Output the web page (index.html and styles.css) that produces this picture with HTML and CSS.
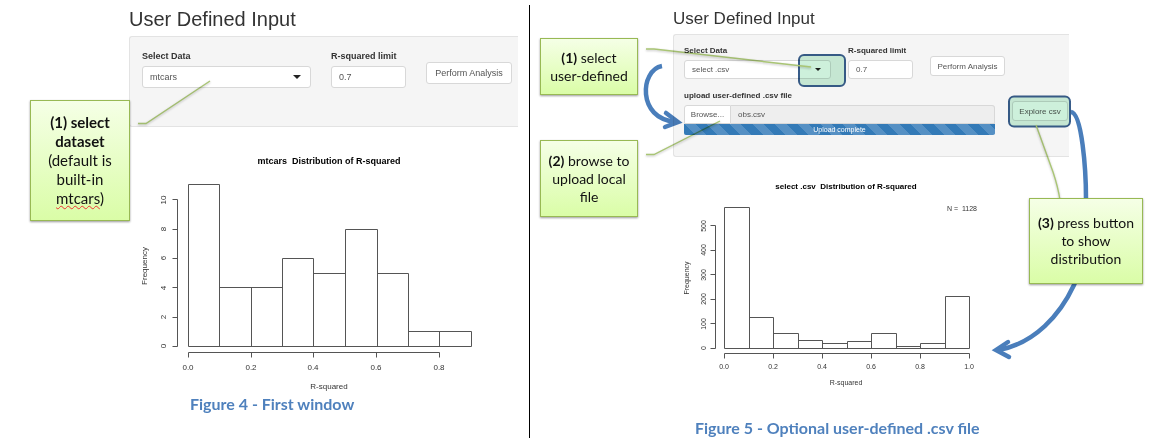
FILE: index.html
```
<!DOCTYPE html>
<html lang="en">
<head>
<meta charset="utf-8">
<title>User Defined Input</title>
<link rel="stylesheet" href="styles.css">
</head>
<body>
<main class="figures">
  <figure class="figure figure-first">
    <h1 class="title">User Defined Input</h1>
    <form class="panel">
      <div class="row">
        <div class="field">
          <label for="data-a">Select Data</label>
          <span class="select"><select id="data-a"><option>mtcars</option><option>select .csv</option></select></span>
        </div>
        <div class="field">
          <label for="limit-a">R-squared limit</label>
          <input class="control" id="limit-a" type="text" value="0.7">
        </div>
        <button class="btn" type="button">Perform Analysis</button>
      </div>
    </form>
    <svg class="chart" viewBox="129 127 389 265" role="img" aria-label="mtcars distribution of R-squared">
      <text class="chart-title" x="329" y="164" xml:space="preserve">mtcars  Distribution of R-squared</text>
      <g class="lines">
        <path d="M172.5 346.5H177.5V199.5H172.5M172.5 317.5h5M172.5 287.5h5M172.5 258.5h5M172.5 229.5h5"/>
        <path d="M188.5 357.5V352.5H439.5V357.5M251.5 352.5v5M313.5 352.5v5M376.5 352.5v5"/>
        <path d="M188.5 346.5V184.5H219.5V346.5M219.5 287.5H282.5M251.5 287.5V346.5M282.5 346.5V258.5H313.5V346.5M313.5 273.5H345.5M345.5 346.5V229.5H377.5V346.5M377.5 273.5H408.5V346.5M408.5 331.5H471.5V346.5M439.5 331.5V346.5M188.5 346.5H471.5"/>
      </g>
      <g class="ticks">
        <text x="188" y="370">0.0</text><text x="251" y="370">0.2</text><text x="313" y="370">0.4</text><text x="376" y="370">0.6</text><text x="439" y="370">0.8</text>
        <text x="329" y="389">R-squared</text>
        <text transform="translate(166 346) rotate(-90)">0</text>
        <text transform="translate(166 317) rotate(-90)">2</text>
        <text transform="translate(166 288) rotate(-90)">4</text>
        <text transform="translate(166 258) rotate(-90)">6</text>
        <text transform="translate(166 229) rotate(-90)">8</text>
        <text transform="translate(166 200) rotate(-90)">10</text>
        <text transform="translate(147 266) rotate(-90)">Frequency</text>
      </g>
    </svg>
    <figcaption class="caption">Figure 4 - First window</figcaption>
    <svg class="notes" width="529" height="433" viewBox="0 5 529 433" aria-hidden="true">
      <path class="leader" d="M138 123.5H146L210 81"/>
    </svg>
    <p class="callout callout-dataset"><span><b>(1) select<br>dataset</b><br>(default is<br>built-in<br><span class="misspelt">mtcars</span>)</span></p>
  </figure>

  <figure class="figure figure-second">
    <h2 class="title">User Defined Input</h2>
    <form class="panel">
      <div class="row">
        <div class="field">
          <label for="data-b">Select Data</label>
          <span class="select"><select id="data-b"><option>select .csv</option><option>mtcars</option></select></span>
        </div>
        <div class="field">
          <label for="limit-b">R-squared limit</label>
          <input class="control" id="limit-b" type="text" value="0.7">
        </div>
        <button class="btn" type="button">Perform Analysis</button>
      </div>
      <div class="row row-upload">
        <div class="field">
          <label for="file-b">upload user-defined .csv file</label>
          <div>
            <div class="file">
              <button class="browse" type="button">Browse...</button>
              <input class="control file-name" id="file-b" type="text" value="obs.csv" readonly>
            </div>
            <div class="progress">Upload complete</div>
          </div>
        </div>
        <button class="btn" type="button">Explore csv</button>
      </div>
    </form>
    <svg class="chart" viewBox="673 157 396 251" role="img" aria-label="select .csv distribution of R-squared">
      <text class="chart-title" x="846" y="189" xml:space="preserve">select .csv  Distribution of R-squared</text>
      <g class="lines">
        <path d="M710.5 348.5H715.5V225.5H710.5M710.5 323.5h5M710.5 299.5h5M710.5 274.5h5M710.5 250.5h5"/>
        <path d="M724.5 358.5V353.5H969.5V358.5M773.5 353.5v5M822.5 353.5v5M871.5 353.5v5M920.5 353.5v5"/>
        <path d="M724.5 348.5V207.5H749.5V348.5M749.5 317.5H773.5V348.5M773.5 333.5H798.5V348.5M798.5 340.5H822.5V348.5M822.5 343.5H847.5M847.5 348.5V341.5H871.5M871.5 348.5V333.5H896.5V348.5M896.5 346.5H920.5M920.5 348.5V343.5H945.5M945.5 348.5V296.5H969.5V348.5M724.5 348.5H969.5"/>
      </g>
      <g class="ticks">
        <text x="962" y="211" xml:space="preserve">N =  1128</text>
        <text x="724" y="369">0.0</text><text x="773" y="369">0.2</text><text x="822" y="369">0.4</text><text x="871" y="369">0.6</text><text x="920" y="369">0.8</text><text x="969" y="369">1.0</text>
        <text x="846" y="385">R-squared</text>
        <text transform="translate(706 348) rotate(-90)">0</text>
        <text transform="translate(706 324) rotate(-90)">100</text>
        <text transform="translate(706 299) rotate(-90)">200</text>
        <text transform="translate(706 275) rotate(-90)">300</text>
        <text transform="translate(706 250) rotate(-90)">400</text>
        <text transform="translate(706 226) rotate(-90)">500</text>
        <text transform="translate(689 278) rotate(-90)">Frequency</text>
      </g>
    </svg>
    <figcaption class="caption">Figure 5 - Optional user-defined .csv file</figcaption>
    <svg class="notes" width="624" height="433" viewBox="530 5 624 433" aria-hidden="true">
      <rect class="spot" x="799" y="55" width="46" height="31" rx="5"/>
      <rect class="spot" x="1009" y="96.5" width="61" height="30" rx="5"/>
      <path class="leader" d="M646 49H654L811 67"/>
      <path class="leader" d="M646 154.5H654L720 121"/>
      <path class="leader" d="M1036 125L1053 172Q1058 187 1060 200"/>
      <path class="arrow" d="M662 66C640 70 637 119 675 121.5"/>
      <path class="arrow arrow-head" d="M666 113L678 122L665 127"/>
      <path class="arrow" d="M1071 112C1082 113 1086 170 1086 199C1089 250 1080 272 1074 285C1060 315 1035 343 999 350"/>
      <path class="arrow arrow-head" d="M1008 342L996 350L1009 357"/>
    </svg>
    <p class="callout callout-source"><span><b>(1)</b> select<br>user-defined</span></p>
    <p class="callout callout-browse"><span><b>(2)</b> browse to<br>upload local<br>file</span></p>
    <p class="callout callout-press"><span><b>(3)</b> press button<br>to show<br>distribution</span></p>
  </figure>
</main>
</body>
</html>
```
FILE: styles.css
```
* { box-sizing: border-box; }

body {
  margin: 0;
  background: #fff;
  color: #333;
  font-family: "Liberation Sans", Arial, sans-serif;
}

.figures {
  display: grid;
  grid-template-columns: 530fr 624fr;
  padding: 5px 0 9px;
}

.figure {
  --text: 9px;
  --label-line: 11px;
  --control: 22px;
  --gap: 20px;
  position: relative;
  margin: 0;
  font-size: var(--text);
}

.figure-first {
  padding: 0 11px 0 129px;
  border-right: 1px solid #000;
}

.figure-second {
  --text: 8px;
  --label-line: 10px;
  --control: 19px;
  --gap: 17px;
  padding: 0 85px 0 143px;
}

.title {
  margin: 0 0 3px;
  font-size: 20px;
  font-weight: 400;
  line-height: 28px;
}

.figure-second .title {
  margin-bottom: 1px;
  font-size: 17px;
}

.panel {
  padding: 14px 6px 38px 12px;
  background: #f5f5f5;
  border: 1px solid #e3e3e3;
  border-right: 0;
  border-radius: 3px 0 0 3px;
}

.figure-second .panel { padding: 11px 1px 21px 10px; }

.row {
  display: grid;
  grid-template-columns: 169fr 75fr 86fr;
  align-items: start;
  gap: var(--gap);
}

.figure-second .row {
  grid-template-columns: 147fr 65fr 75fr;
  padding-right: 63px;
}

.figure-second .row-upload {
  grid-template-columns: 311fr 56fr;
  margin-top: 12px;
  padding-right: 0;
}

.field {
  display: grid;
  gap: 4px;
  min-width: 0;
}

.field label {
  font-weight: 700;
  line-height: var(--label-line);
}

.select {
  position: relative;
  display: block;
}

.select::after {
  content: "";
  position: absolute;
  top: calc(50% - 2px);
  right: 10px;
  border: 4px solid transparent;
  border-top-color: #222;
  border-bottom: 0;
  pointer-events: none;
}

.figure-second .select::after { border-width: 3px 3px 0; }

.select select,
.control,
.btn,
.browse {
  display: block;
  width: 100%;
  min-width: 0;
  height: var(--control);
  margin: 0;
  padding: 0 7px;
  background: #fff;
  border: 1px solid #d8d8d8;
  border-radius: 3px;
  color: #555;
  font: inherit;
  appearance: none;
}

.btn {
  margin-top: 11px;
  padding: 0;
  text-align: center;
}

.figure-second .btn {
  height: 20px;
  margin-top: 10px;
}

.file {
  display: grid;
  grid-template-columns: 47px 1fr;
}

.browse {
  padding: 0;
  border-radius: 3px 0 0 0;
}

.file .file-name {
  background: #eee;
  border-left: 0;
  border-radius: 0 3px 0 0;
}

.progress {
  background: repeating-linear-gradient(45deg, #337ab7 0 8px, #5590c4 8px 16px);
  border-radius: 0 0 2px 2px;
  color: #fff;
  font-size: 7px;
  line-height: 11px;
  text-align: center;
}

.chart {
  display: block;
  width: 100%;
  font-size: 8px;
  text-anchor: middle;
}

.figure-second .ticks { font-size: 7px; }

.chart-title {
  fill: #000;
  font-size: var(--text);
  font-weight: 700;
}

.ticks { fill: #333; }

.lines {
  fill: none;
  stroke: #555;
}

.caption {
  margin: 2px 0 0 61px;
  color: #4f81bd;
  font: 700 16px/20px Lato, sans-serif;
}

.figure-second .caption { margin: 10px 0 0 22px; }

.notes {
  position: absolute;
  top: 0;
  left: 0;
  fill: none;
  mix-blend-mode: multiply;
  pointer-events: none;
}

.leader {
  stroke: #a9c574;
  stroke-width: 1.4;
  filter: drop-shadow(0 1px 1px rgba(0, 0, 0, .25));
}

.arrow {
  stroke: #4a7ebb;
  stroke-width: 4.5;
}

.arrow-head { stroke-linecap: round; }

.spot {
  fill: #cdf0db;
  stroke: #385d8a;
  stroke-width: 2;
}

.callout {
  position: absolute;
  display: grid;
  place-items: center;
  margin: 0;
  background: linear-gradient(#f5ffe6, #dafda7);
  border: 1px solid #98b954;
  box-shadow: 0 1px 2px rgba(0, 0, 0, .4);
  color: #111;
  font: 14px/18px Lato, sans-serif;
  text-align: center;
  white-space: nowrap;
}

.callout-dataset {
  top: 95px;
  left: 30px;
  width: 100px;
  height: 121px;
  font-size: 15px;
  line-height: 19px;
}

.misspelt { text-decoration: underline wavy #e33 1px; }

.callout-source {
  top: 33px;
  left: 10px;
  width: 98px;
  height: 57px;
}

.callout-browse {
  top: 135px;
  left: 10px;
  width: 98px;
  height: 77px;
}

.callout-press {
  top: 193px;
  left: 499px;
  width: 114px;
  height: 86px;
}
```
